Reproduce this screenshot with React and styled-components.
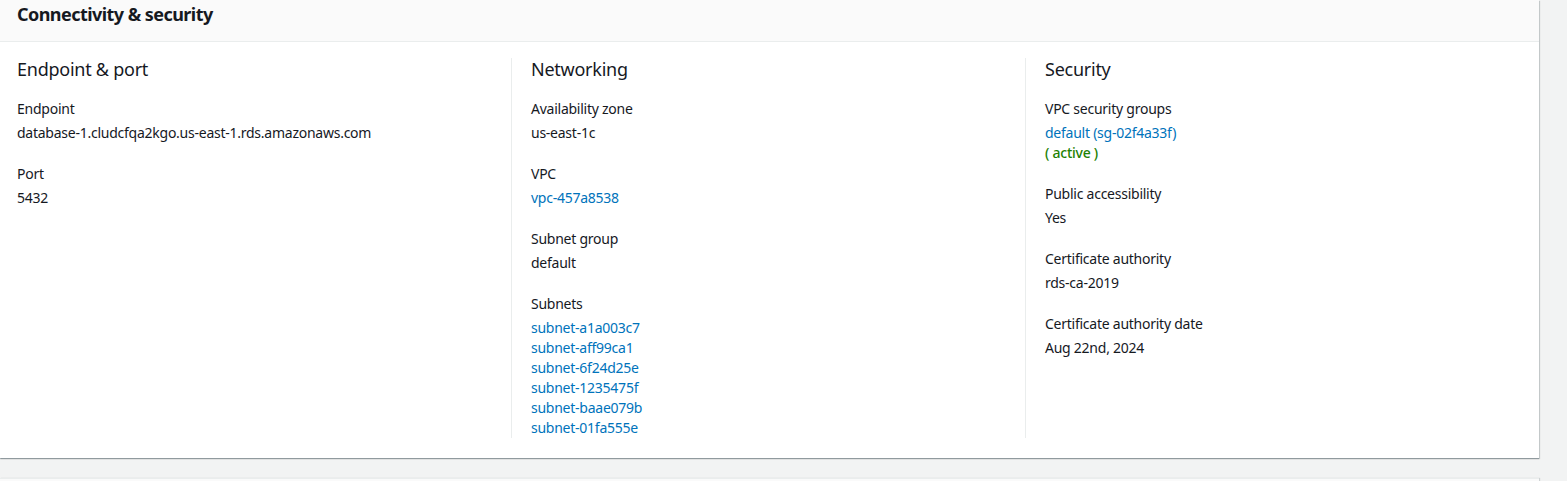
import React from "react";
import styled, { createGlobalStyle } from "styled-components";

const GlobalStyle = createGlobalStyle`
  html, body {
    margin: 0;
    padding: 0;
    background: #f2f3f3;
    font-family: "Noto Sans", "Open Sans", Arial, sans-serif;
    color: #16191f;
  }
`;

const Page = styled.div`
  width: 1539px;
  display: flex;
  flex-direction: column;
  gap: 20px;
`;

const Card = styled.section`
  background: #fff;
  box-shadow: 0 1px 1px 0 rgba(0, 28, 36, 0.3), 1px 1px 1px 0 rgba(0, 28, 36, 0.15);
`;

const CardHeader = styled.div`
  height: 42px;
  box-sizing: border-box;
  padding: 3px 17px 0;
  background: #fafafa;
  border-bottom: 1px solid #eaeded;
`;

const Title = styled.h2`
  margin: 0;
  font-size: 18px;
  line-height: 22px;
  font-weight: 700;
  letter-spacing: -0.55px;
`;

const Columns = styled.div`
  display: grid;
  grid-template-columns: 494px 514px 514px;
  padding: 16px 0 20px 17px;
`;

const Column = styled.div`
  display: flex;
  flex-direction: column;
  padding-left: ${(p) => (p.$first ? 0 : 19)}px;
  border-left: ${(p) => (p.$first ? "none" : "1px solid #eaeded")};
`;

const ColumnTitle = styled.h3`
  margin: 0 0 19px;
  font-size: 18px;
  line-height: 22px;
  font-weight: 400;
  letter-spacing: -0.25px;
`;

const Field = styled.div`
  display: flex;
  flex-direction: column;
  margin-bottom: 21px;
  letter-spacing: -0.25px;
  &:last-child {
    margin-bottom: 0;
  }
`;

const Label = styled.div`
  font-size: 14px;
  line-height: 20px;
  margin-bottom: 4px;
`;

const Value = styled.div`
  font-size: 14px;
  line-height: 20px;
  color: ${(p) => p.$color || "#16191f"};
  font-weight: ${(p) => (p.$color ? 500 : 400)};
`;

const Link = styled.a`
  font-size: 14px;
  line-height: 20px;
  color: #0073bb;
  text-decoration: none;
  display: block;
`;

const NextCard = styled.div`
  height: 10px;
  background: #fafafa;
  border-top: 1px solid #eaeded;
  box-shadow: 1px 0 1px 0 rgba(0, 28, 36, 0.15);
`;

const subnets = [
  "subnet-a1a003c7",
  "subnet-aff99ca1",
  "subnet-6f24d25e",
  "subnet-1235475f",
  "subnet-baae079b",
  "subnet-01fa555e",
];

export default function App() {
  return (
    <>
      <GlobalStyle />
      <Page>
        <Card>
          <CardHeader>
            <Title>Connectivity &amp; security</Title>
          </CardHeader>
          <Columns>
            <Column $first>
              <ColumnTitle>Endpoint &amp; port</ColumnTitle>
              <Field>
                <Label>Endpoint</Label>
                <Value>database-1.cludcfqa2kgo.us-east-1.rds.amazonaws.com</Value>
              </Field>
              <Field>
                <Label>Port</Label>
                <Value>5432</Value>
              </Field>
            </Column>
            <Column>
              <ColumnTitle>Networking</ColumnTitle>
              <Field>
                <Label>Availability zone</Label>
                <Value>us-east-1c</Value>
              </Field>
              <Field>
                <Label>VPC</Label>
                <Link href="#">vpc-457a8538</Link>
              </Field>
              <Field>
                <Label>Subnet group</Label>
                <Value>default</Value>
              </Field>
              <Field>
                <Label>Subnets</Label>
                {subnets.map((s) => (
                  <Link key={s} href="#">
                    {s}
                  </Link>
                ))}
              </Field>
            </Column>
            <Column>
              <ColumnTitle>Security</ColumnTitle>
              <Field>
                <Label>VPC security groups</Label>
                <Link href="#">default (sg-02f4a33f)</Link>
                <Value $color="#1d8102">( active )</Value>
              </Field>
              <Field>
                <Label>Public accessibility</Label>
                <Value>Yes</Value>
              </Field>
              <Field>
                <Label>Certificate authority</Label>
                <Value>rds-ca-2019</Value>
              </Field>
              <Field>
                <Label>Certificate authority date</Label>
                <Value>Aug 22nd, 2024</Value>
              </Field>
            </Column>
          </Columns>
        </Card>
        <NextCard />
      </Page>
    </>
  );
}
